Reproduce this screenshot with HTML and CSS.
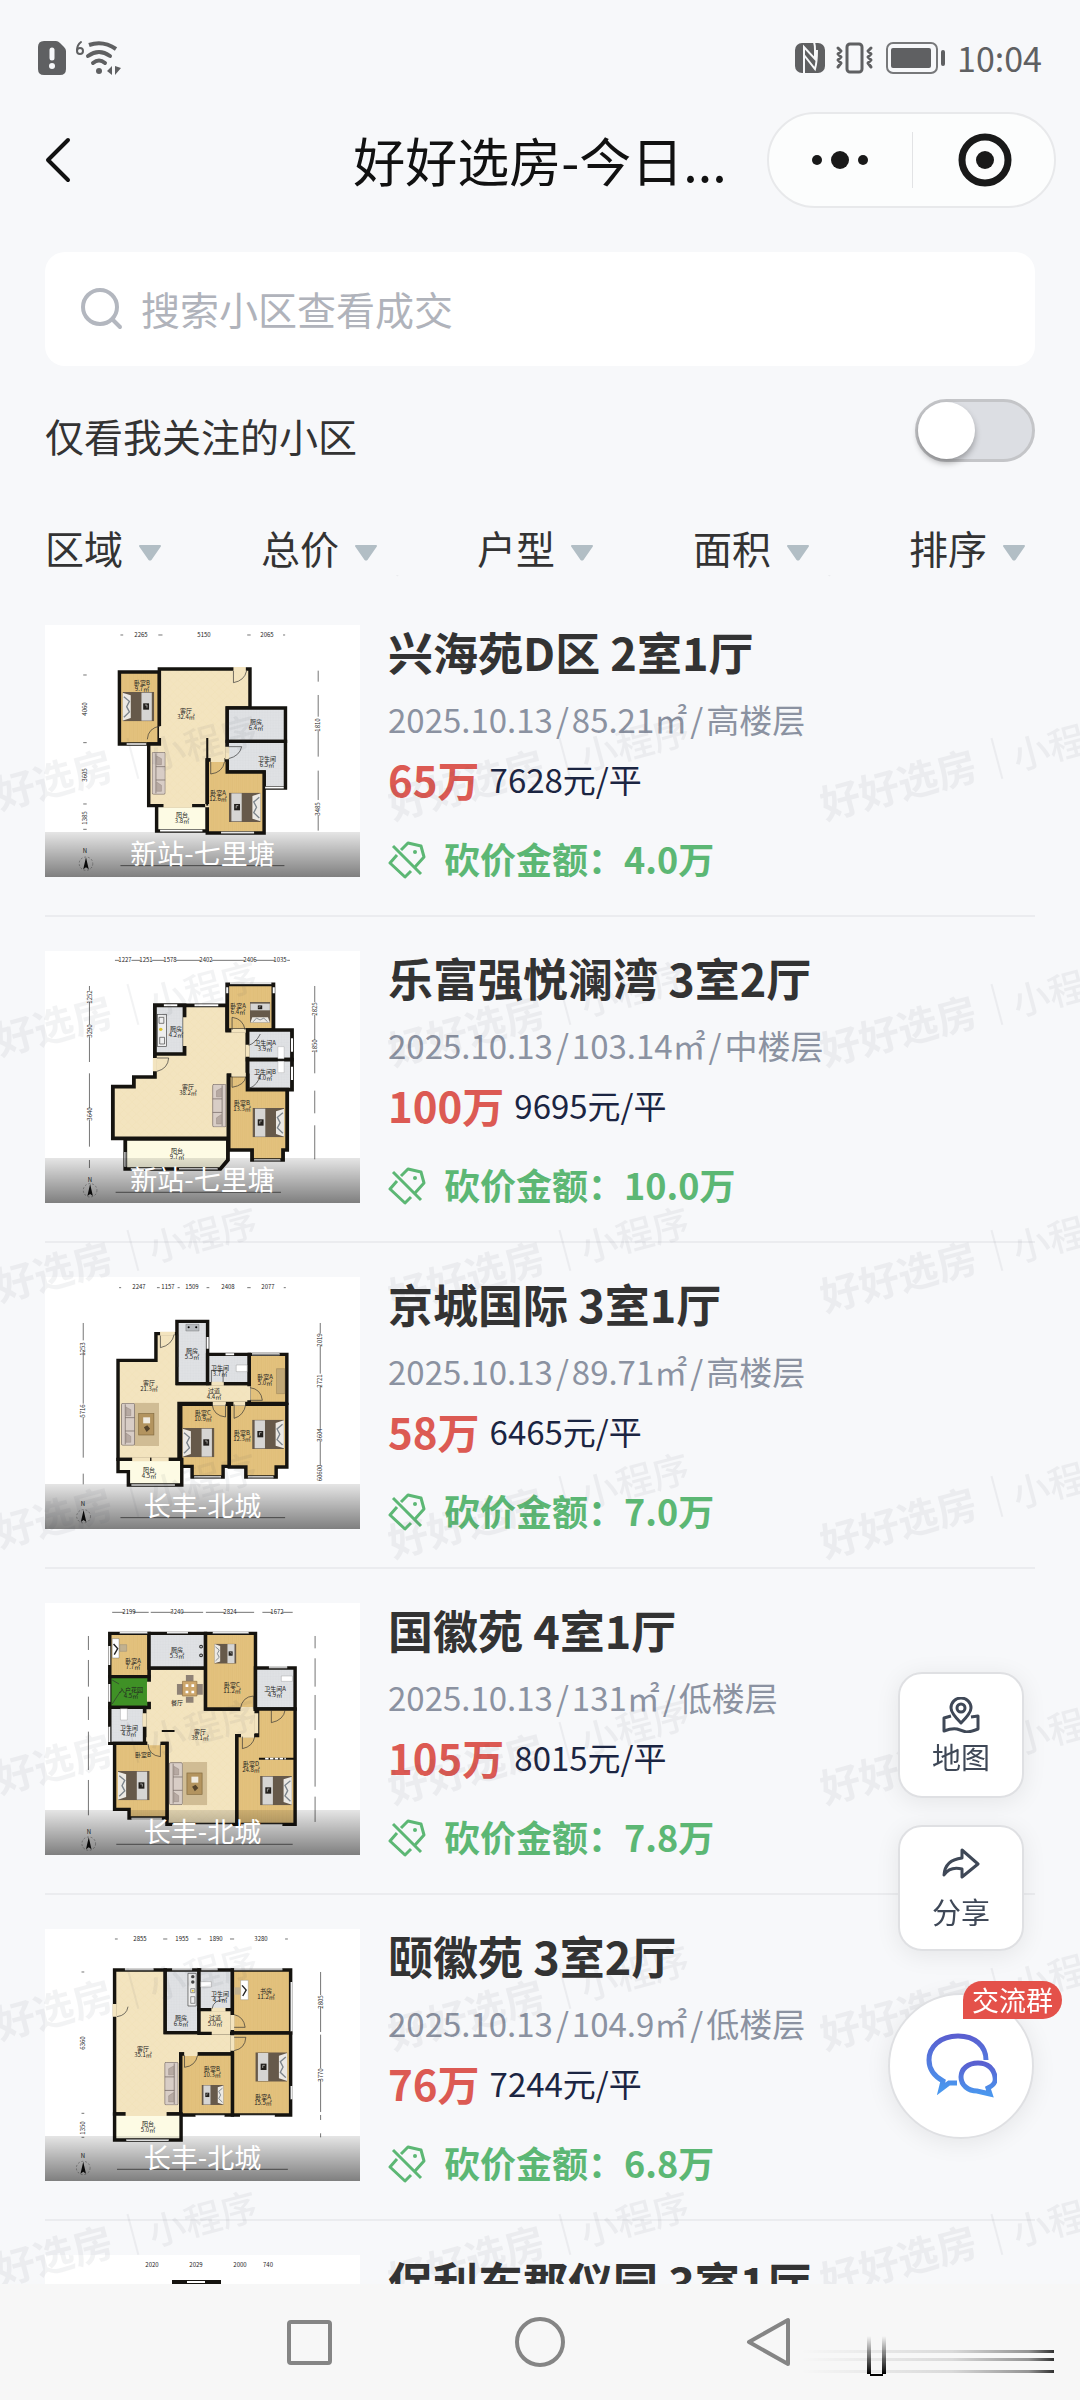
FILE: index.html
```html
<!DOCTYPE html>
<html lang="zh-CN">
<head>
    <meta charset="UTF-8">
    <meta name="viewport" content="width=device-width, initial-scale=1.0">
    <title>好好选房</title>
    <link rel="stylesheet" href="styles.css">
</head>
<body>
    <!-- shared svg pieces -->
    <svg class="defs" width="0" height="0" aria-hidden="true">
        <defs>
            <pattern id="wood" width="12" height="90" patternUnits="userSpaceOnUse">
                <rect width="12" height="90" fill="#e3c27e"/>
                <path d="M3 0v90M9 0v90" stroke="#dab76d" stroke-width="1"/>
            </pattern>
            <pattern id="tile" width="8" height="8" patternUnits="userSpaceOnUse">
                <rect width="8" height="8" fill="#dfe1e4"/>
                <path d="M0 0H8M0 0V8" stroke="#d3d6da" stroke-width="1"/>
            </pattern>
            <pattern id="floor" width="24" height="24" patternUnits="userSpaceOnUse">
                <rect width="24" height="24" fill="#f3e4bf"/>
                <path d="M0 12L12 0L24 12L12 24Z" fill="none" stroke="#eddcb2" stroke-width="1"/>
            </pattern>
            <linearGradient id="chat" x1="0" y1="0" x2="0" y2="1">
                <stop offset="0" stop-color="#5a5fd0"/>
                <stop offset="1" stop-color="#4a97ee"/>
            </linearGradient>
            <linearGradient id="streak" x1="0" y1="0" x2="1" y2="0">
                <stop offset="0" stop-color="#000" stop-opacity="0"/>
                <stop offset=".6" stop-color="#000" stop-opacity=".12"/>
                <stop offset=".9" stop-color="#000" stop-opacity=".4"/>
                <stop offset="1" stop-color="#000" stop-opacity=".8"/>
            </linearGradient>
            <linearGradient id="streak-down" x1="0" y1="0" x2="0" y2="1">
                <stop offset="0" stop-color="#000" stop-opacity="0"/>
                <stop offset="1" stop-color="#000"/>
            </linearGradient>
        </defs>
        <symbol id="bed" viewBox="0 0 92 88">
            <rect width="92" height="88" fill="#66594a"/>
            <path d="M0 2L24 10V78L0 86Z" fill="#ece9e4"/>
            <path d="M4 14L20 28L12 44L20 60L4 76" fill="none" stroke="#7d858c" stroke-width="4"/>
            <rect x="55" y="2" width="30" height="84" fill="#d6d5d3"/>
            <rect x="60" y="34" width="17" height="19" fill="#221f1c"/>
            <path d="M65 39h6v8" fill="none" stroke="#d6d5d3" stroke-width="2"/>
        </symbol>
        <symbol id="sofa" viewBox="0 0 40 128">
            <rect x="1" y="1" width="38" height="126" rx="4" fill="#d8cdc6" stroke="#6d625d" stroke-width="2"/>
            <path d="M12 4v120M12 44h27M12 84h27" fill="none" stroke="#6d625d" stroke-width="2"/>
            <path d="M14 12l14 8v18H14zM14 90l14 10v18H14z" fill="#b6a9a2" stroke="#83766f"/>
        </symbol>
        <symbol id="rug" viewBox="0 0 72 130">
            <rect width="72" height="130" fill="#d0bc94"/>
            <rect x="13" y="33" width="44" height="64" fill="#b3945f" stroke="#826a3f" stroke-width="2"/>
            <rect x="26" y="44" width="20" height="18" fill="#f0ebe0"/>
            <path d="M28 74l10-6 8 10-10 10z" fill="#54432b"/>
        </symbol>
        <symbol id="compass" viewBox="0 0 44 50">
            <circle cx="22" cy="25" r="20" fill="none" stroke="#222" stroke-width="1" stroke-dasharray="6 5"/>
            <path d="M22 6L30 42L22 36L14 42Z" fill="#111"/>
        </symbol>
        <symbol id="cut" viewBox="0 0 38 38">
            <g fill="none" stroke="currentColor" stroke-width="3" stroke-linejoin="round">
                <path d="M13 9L20 2L33 5L36 16L27 26"/>
                <path d="M9 14L2 22L17 36L23 30"/>
                <path d="M5 5L33 33"/>
            </g>
            <circle cx="27" cy="11" r="2" fill="currentColor"/>
        </symbol>
        <symbol id="caret" viewBox="0 0 24 16">
            <path d="M2 1H22L13 14Q12 15 11 14Z" fill="#b2bec5" stroke="#b2bec5" stroke-width="2" stroke-linejoin="round"/>
        </symbol>
    </svg>

    <header class="header">
        <div class="status-bar">
            <div class="status-group">
                <svg width="28" height="34" viewBox="0 0 28 34"><path d="M6 0H18Q20 0 22 2L26 6Q28 8 28 10V28Q28 34 22 34H6Q0 34 0 28V6Q0 0 6 0Z" fill="#5f6062"/><path d="M14 9V17" stroke="#f7f8fa" stroke-width="5" stroke-linecap="round"/><circle cx="14" cy="25" r="3" fill="#f7f8fa"/></svg>
                <svg width="46" height="36" viewBox="0 0 46 36">
                    <g fill="none" stroke="#5f6062" stroke-width="4" stroke-linecap="round">
                        <path d="M14 5Q28 0 41 9" stroke-linecap="butt"/>
                        <path d="M13 16Q24 8 35 16"/>
                        <path d="M18 23Q24 18 30 23"/>
                        <path d="M6 2Q2 5 2 10" stroke-width="2"/>
                        <ellipse cx="5" cy="11" rx="3" ry="3" stroke-width="2"/>
                    </g>
                    <circle cx="24" cy="31" r="3" fill="#5f6062"/>
                    <path d="M37 26V35L32 31ZM40 26V35L46 28Z" fill="#5f6062"/>
                </svg>
            </div>
            <div class="status-group status-right">
                <svg width="30" height="32" viewBox="0 0 30 32"><rect y="1" width="30" height="30" rx="7" fill="#5f6062"/><path d="M9 32V5L20 17V8Q20 3 19 0M9 13L20 27Q22 20 22 8" fill="none" stroke="#f7f8fa" stroke-width="2"/></svg>
                <svg width="40" height="32" viewBox="0 0 40 32"><g fill="none" stroke="#5f6062" stroke-width="3" stroke-linejoin="round" stroke-linecap="round"><rect x="12" y="2" width="15" height="28" rx="3"/><path d="M3 6L6 9L3 12L6 15L3 18L6 21L3 25M36 6L33 9L36 12L33 15L36 18L33 21L36 25"/></g></svg>
                <svg width="62" height="34" viewBox="0 0 62 34"><rect x="2" y="2" width="50" height="30" rx="6" fill="none" stroke="#77787a" stroke-width="2"/><rect x="6" y="7" width="40" height="20" rx="2" fill="#5f6062"/><path d="M58 11V23" stroke="#5f6062" stroke-width="4" stroke-linecap="round"/></svg>
                <span class="clock">10:04</span>
            </div>
        </div>
        <div class="nav-bar">
            <button class="back" type="button" aria-label="返回">
                <svg width="28" height="46" viewBox="0 0 28 46"><path d="M24 3L4 23L24 43" fill="none" stroke="#111" stroke-width="4" stroke-linecap="round" stroke-linejoin="round"/></svg>
            </button>
            <h1 class="page-title">好好选房-今日...</h1>
            <div class="capsule">
                <button type="button" aria-label="更多">
                    <svg width="58" height="20" viewBox="0 0 58 20" fill="#191919"><circle cx="6" cy="10" r="5"/><circle cx="29" cy="10" r="9"/><circle cx="52" cy="10" r="5"/></svg>
                </button>
                <button type="button" aria-label="关闭">
                    <svg width="54" height="54" viewBox="0 0 54 54"><circle cx="27" cy="27" r="23" fill="none" stroke="#191919" stroke-width="7"/><circle cx="27" cy="27" r="9" fill="#191919"/></svg>
                </button>
            </div>
        </div>
    </header>

    <main class="content">
        <label class="search">
            <svg width="42" height="42" viewBox="0 0 42 42"><g fill="none" stroke="#b3b7bf" stroke-width="4" stroke-linecap="round"><circle cx="19" cy="19" r="17"/><path d="M32 32L39 39"/></g></svg>
            <input type="text" placeholder="搜索小区查看成交" aria-label="搜索小区查看成交">
        </label>

        <div class="follow">
            <label for="follow">仅看我关注的小区</label>
            <input class="switch" type="checkbox" id="follow">
        </div>

        <div class="filters">
            <div class="filter"><select aria-label="区域"><option>区域</option></select><svg width="24" height="16"><use href="#caret"/></svg></div>
            <div class="filter"><select aria-label="总价"><option>总价</option></select><svg width="24" height="16"><use href="#caret"/></svg></div>
            <div class="filter"><select aria-label="户型"><option>户型</option></select><svg width="24" height="16"><use href="#caret"/></svg></div>
            <div class="filter"><select aria-label="面积"><option>面积</option></select><svg width="24" height="16"><use href="#caret"/></svg></div>
            <div class="filter"><select aria-label="排序"><option>排序</option></select><svg width="24" height="16"><use href="#caret"/></svg></div>
        </div>

        <div class="list">
            <article class="item">
                <div class="thumb">
                    <svg viewBox="0 0 315 252">
                        <g transform="scale(.3445 .3333) translate(-131 -75)">
                            <g stroke="#15130f" stroke-width="10">
                                <path d="M347 216H463V432H347Z" fill="url(#wood)"/>
                                <path d="M463 207H726V324H660V480H602V617H432V432H463Z" fill="url(#floor)"/>
                                <path d="M660 324H829V424H660Z" fill="url(#tile)"/>
                                <path d="M660 424H829V564H767V516H660Z" fill="url(#tile)"/>
                                <path d="M455 617H602V693H455Z" fill="#fdfbe4"/>
                                <path d="M602 480H660V516H767V699H602Z" fill="url(#wood)"/>
                            </g>
                            <path d="M678 207H714M660 440V478M468 378V414M475 617H558M612 480H652M602 612V622" stroke="#f3e4bf" stroke-width="12"/>
                            <path d="M602 414V617" stroke="#15130f" stroke-width="6"/>
                            <path d="M368 432H425M642 698H738M465 692H588M770 563H824" stroke="#fff" stroke-width="5"/>
                            <path d="M678 213V248Q710 242 716 213M428 418Q430 384 466 378M612 486V522Q646 518 652 486M664 476Q696 468 702 440H664" fill="none" stroke="#333" stroke-width="2"/>
                            <use href="#bed" x="356" y="276" width="92" height="88"/>
                            <use href="#bed" x="-757" y="578" width="92" height="88" transform="scale(-1 1)"/>
                            <use href="#sofa" x="441" y="456" width="40" height="128"/>
                            <g stroke="#333" stroke-width="2" fill="none">
                                <path d="M924 212V245M924 285V350M924 392V470M924 512V600M924 645V692M350 797H826"/>
                                <path d="M350 105h8M460 105h12M718 105h10M822 105h6M242 225h10M242 428h10M242 612h10M242 688h10"/>
                            </g>
                            <use href="#compass" x="228" y="766" width="44" height="50"/>
                        </g>
                        <g class="plan-text">
                            <text x="96" y="12">2265</text><text x="159" y="12">5150</text><text x="222" y="12">2065</text>
                            <text x="97" y="60">卧室B</text><text x="97" y="66">9.7㎡</text>
                            <text x="141" y="88">客厅</text><text x="141" y="94">32.4㎡</text>
                            <text x="211" y="99">厨房</text><text x="211" y="105">6.4㎡</text>
                            <text x="222" y="136">卫生间</text><text x="222" y="142">6.5㎡</text>
                            <text x="173" y="170">卧室A</text><text x="173" y="176">12.6㎡</text>
                            <text x="137" y="192">阳台</text><text x="137" y="198">3.8㎡</text>
                            <text x="40" y="228">N</text>
                            <text transform="translate(42 84) rotate(-90)">4060</text>
                            <text transform="translate(42 150) rotate(-90)">3605</text>
                            <text transform="translate(42 193) rotate(-90)">1385</text>
                            <text transform="translate(275 100) rotate(-90)">1810</text>
                            <text transform="translate(275 184) rotate(-90)">3485</text>
                        </g>
                    </svg>
                    <span class="area">新站-七里塘</span>
                </div>
                <div class="info">
                    <h2>兴海苑D区 2室1厅</h2>
                    <p class="meta">2025.10.13<i>/</i>85.21㎡<i>/</i>高楼层</p>
                    <p class="price"><strong>65万</strong><span>7628元/平</span></p>
                    <p class="bargain"><svg width="38" height="38"><use href="#cut"/></svg>砍价金额：4.0万</p>
                </div>
            </article>

            <article class="item">
                <div class="thumb">
                    <svg viewBox="0 0 315 252">
                        <g transform="scale(.3445 .3333) translate(-131 -63)">
                            <g stroke="#15130f" stroke-width="11">
                                <path d="M450 226H660V302H719V436H664V625H328V470H389V441H450Z" fill="url(#floor)"/>
                                <path d="M450 226H536V372H450Z" fill="url(#tile)"/>
                                <path d="M660 163H794V300H660Z" fill="url(#wood)"/>
                                <path d="M719 300H848V389H719Z" fill="url(#tile)"/>
                                <path d="M719 389H848V479H719Z" fill="url(#tile)"/>
                                <path d="M664 436H719V479H834V660H822V690H732V660H664Z" fill="url(#wood)"/>
                                <path d="M364 627H662V690L640 717H364Z" fill="#fdfbe4"/>
                            </g>
                            <path d="M538 262V348M450 384V424M672 302H714M719 344V380M672 434H714" stroke="#f3e4bf" stroke-width="12"/>
                            <path d="M476 226H515M565 226H634M848 325V365M848 410V450M364 666V710M380 717H470M520 717H632M738 691H814M668 160H788M660 172V190M795 172V190" stroke="#fff" stroke-width="6"/>
                            <path d="M364 666V710M380 718H632M738 692H814M668 163H788" stroke="#222" stroke-width="2"/>
                            <path d="M456 424Q488 416 490 384H456M674 300V262Q706 266 712 300M674 440V472Q710 466 714 440M722 346Q742 340 756 312M722 476Q750 466 758 430" fill="none" stroke="#333" stroke-width="2"/>
                            <rect x="457" y="254" width="27" height="96" fill="#eee" stroke="#444" stroke-width="2"/>
                            <path d="M462 262h14v18h-14zM464 322h14v20h-14z" fill="none" stroke="#444" stroke-width="2"/><circle cx="467" cy="298" r="5" fill="#ddc22c"/>
                            <path d="M807 350h18v36h-18zM807 394h18v34h-18z" fill="#fff" stroke="#999"/>
                            <use href="#bed" x="-297" y="726" width="100" height="59" transform="rotate(-90)" preserveAspectRatio="none"/>
                            <use href="#bed" x="-826" y="534" width="93" height="88" transform="scale(-1 1)"/>
                            <use href="#sofa" x="-658" y="462" width="42" height="130" transform="scale(-1 1)"/>
                            <g stroke="#333" stroke-width="2" fill="none">
                                <path d="M334 91H346M382 91H408M442 91H478M512 91H582M616 91H710M744 91H798M834 91H842"/>
                                <path d="M260 168V182M260 216V284M260 320V396M260 430V535M260 570V650M260 690V714M914 168V216M914 254V330M914 364V430M914 482V550M914 586V688M336 787H816"/>
                            </g>
                            <use href="#compass" x="240" y="756" width="44" height="50"/>
                        </g>
                        <g class="plan-text">
                            <text x="80" y="11">1227</text><text x="101" y="11">1251</text><text x="125" y="11">1578</text><text x="161" y="11">2402</text><text x="205" y="11">2406</text><text x="235" y="11">1035</text>
                            <text x="193" y="57">卧室A</text><text x="193" y="63">6.4㎡</text>
                            <text x="131" y="80">厨房</text><text x="131" y="86">4.2㎡</text>
                            <text x="220" y="94">卫生间A</text><text x="220" y="100">3.9㎡</text>
                            <text x="220" y="123">卫生间B</text><text x="220" y="129">4.0㎡</text>
                            <text x="143" y="138">客厅</text><text x="143" y="144">38.2㎡</text>
                            <text x="197" y="154">卧室B</text><text x="197" y="160">13.3㎡</text>
                            <text x="132" y="202">阳台</text><text x="132" y="208">9.7㎡</text>
                            <text x="45" y="231">N</text>
                            <text transform="translate(47 46) rotate(-90)">1252</text>
                            <text transform="translate(47 80) rotate(-90)">3290</text>
                            <text transform="translate(47 163) rotate(-90)">3640</text>
                            <text transform="translate(272 58) rotate(-90)">2825</text>
                            <text transform="translate(272 95) rotate(-90)">1850</text>
                        </g>
                    </svg>
                    <span class="area">新站-七里塘</span>
                </div>
                <div class="info">
                    <h2>乐富强悦澜湾 3室2厅</h2>
                    <p class="meta">2025.10.13<i>/</i>103.14㎡<i>/</i>中楼层</p>
                    <p class="price"><strong>100万</strong><span>9695元/平</span></p>
                    <p class="bargain"><svg width="38" height="38"><use href="#cut"/></svg>砍价金额：10.0万</p>
                </div>
            </article>

            <article class="item">
                <div class="thumb">
                    <svg viewBox="0 0 315 252">
                        <g transform="scale(.3445 .3333) translate(-131 -80)">
                            <g stroke="#15130f" stroke-width="10">
                                <path d="M453 250H516V400H724V459H520V627H343V330H453Z" fill="url(#floor)"/>
                                <path d="M514 213H603V400H514Z" fill="url(#tile)"/>
                                <path d="M603 312H724V400H603Z" fill="url(#tile)"/>
                                <path d="M724 312H833V459H724Z" fill="url(#wood)"/>
                                <path d="M525 462H666V648H648V680H558V648H525Z" fill="url(#wood)"/>
                                <path d="M666 462H833V650H802V680H714V650H666Z" fill="url(#wood)"/>
                                <path d="M343 627H528V704H373V664H343Z" fill="#fdfbe4"/>
                            </g>
                            <path d="M465 250H508M614 400H650M722 408V450M618 460H656M678 460H712M384 627H436M440 627H490" stroke="#f3e4bf" stroke-width="12"/>
                            <path d="M655 312H680M732 312H812M603 260V295M564 681H642M720 681H794M382 704H508" stroke="#fff" stroke-width="6"/>
                            <path d="M732 313H812M564 682H642M720 682H794M382 704H508M517 252V350" stroke="#333" stroke-width="2"/>
                            <path d="M466 256V292Q500 284 506 252M616 462Q620 496 655 500V462M680 462V504Q708 496 714 462M726 450H762Q758 416 726 412M614 396V360H648V396" fill="none" stroke="#333" stroke-width="2"/>
                            <path d="M540 222h38v20h-38z" fill="#b9bcc0" stroke="#555"/><circle cx="548" cy="231" r="3"/><circle cx="570" cy="231" r="3"/>
                            <path d="M686 344h32v20h-32z" fill="#fff" stroke="#777"/>
                            <path d="M803 355h24v75h-24z" fill="#c1a877" stroke="#7f6d49"/>
                            <use href="#rug" x="390" y="457" width="72" height="130"/>
                            <use href="#sofa" x="351" y="458" width="42" height="128"/>
                            <use href="#bed" x="530" y="533" width="93" height="88"/>
                            <use href="#bed" x="-825" y="508" width="93" height="88" transform="scale(-1 1)"/>
                            <g stroke="#333" stroke-width="2" fill="none">
                                <path d="M242 218V270M242 300V460M242 500V622M242 670V702M930 218V250M930 285V370M930 405V535M930 570V645M350 802H828"/>
                                <path d="M346 112h6M456 112h8M516 112h6M600 112h8M718 112h10M824 112h6"/>
                            </g>
                            <use href="#compass" x="221" y="773" width="44" height="50"/>
                        </g>
                        <g class="plan-text">
                            <text x="94" y="12">2247</text><text x="123" y="12">1157</text><text x="147" y="12">1509</text><text x="183" y="12">2408</text><text x="223" y="12">2077</text>
                            <text x="147" y="76">厨房</text><text x="147" y="82">5.5㎡</text>
                            <text x="175" y="93">卫生间</text><text x="175" y="99">3.7㎡</text>
                            <text x="220" y="102">卧室A</text><text x="220" y="108">5.0㎡</text>
                            <text x="104" y="108">客厅</text><text x="104" y="114">21.3㎡</text>
                            <text x="169" y="116">过道</text><text x="169" y="122">4.4㎡</text>
                            <text x="158" y="138">卧室C</text><text x="158" y="144">10.9㎡</text>
                            <text x="197" y="158">卧室B</text><text x="197" y="164">12.3㎡</text>
                            <text x="104" y="195">阳台</text><text x="104" y="201">4.5㎡</text>
                            <text x="38" y="229">N</text>
                            <text transform="translate(40 72) rotate(-90)">1253</text>
                            <text transform="translate(40 134) rotate(-90)">5716</text>
                            <text transform="translate(277 63) rotate(-90)">2019</text>
                            <text transform="translate(277 104) rotate(-90)">2721</text>
                            <text transform="translate(277 158) rotate(-90)">3604</text>
                            <text transform="translate(277 196) rotate(-90)">60600</text>
                        </g>
                    </svg>
                    <span class="area">长丰-北城</span>
                </div>
                <div class="info">
                    <h2>京城国际 3室1厅</h2>
                    <p class="meta">2025.10.13<i>/</i>89.71㎡<i>/</i>高楼层</p>
                    <p class="price"><strong>58万</strong><span>6465元/平</span></p>
                    <p class="bargain"><svg width="38" height="38"><use href="#cut"/></svg>砍价金额：7.0万</p>
                </div>
            </article>

            <article class="item">
                <div class="thumb">
                    <svg viewBox="0 0 315 252">
                        <g transform="scale(.3445 .3333) translate(-131 -69)">
                            <g stroke="#15130f" stroke-width="10">
                                <path d="M433 264H597V387H744V467H688V733H485V490H420V383H433Z" fill="url(#floor)"/>
                                <path d="M319 160H433V290H319Z" fill="url(#wood)"/>
                                <path d="M433 160H597V264H433Z" fill="url(#tile)"/>
                                <path d="M597 160H742V387H597Z" fill="url(#wood)"/>
                                <path d="M319 290H433V382H319Z" fill="#3f9126"/>
                                <path d="M319 382H420V490H319Z" fill="url(#tile)"/>
                                <path d="M742 264H857V387H742Z" fill="url(#tile)"/>
                                <path d="M333 490H485V714H375V688H333Z" fill="url(#wood)"/>
                                <path d="M748 387H857V733H688V467H748Z" fill="url(#wood)"/>
                            </g>
                            <path d="M433 305V365M698 387H736M744 400V460M420 400V440M428 490H466M700 467H738M425 478H470" stroke="#f3e4bf" stroke-width="12"/>
                            <path d="M348 158H428M485 158H546M618 158H722M781 262H834M318 198V255M318 312V365M318 440V486M382 716H470M500 735H672M700 735H820" stroke="#fff" stroke-width="6"/>
                            <path d="M348 160H428M485 160H546M618 160H722M781 264H834M321 198V255M321 312V365M321 440V486M382 714H470M500 732H672M700 732H820" stroke="#444" stroke-width="2"/>
                            <path d="M470 453H507M752 536H857" stroke="#15130f" stroke-width="6"/>
                            <path d="M770 536H830" stroke="#fff" stroke-width="5" stroke-dasharray="10 4"/>
                            <path d="M698 386Q704 350 736 348V386M788 390V428Q824 420 828 390M704 470V506Q734 500 740 470M466 492V530Q432 526 430 492M326 300L346 312M326 372L350 334" fill="none" stroke="#333" stroke-width="2"/>
                            <path d="M326 176h20v58h-20z" fill="#fff" stroke="#444"/><path d="M330 192l12 14-10 18" fill="none" stroke="#222" stroke-width="4"/><path d="M348 194h20v20h-20z" fill="#c1b190" stroke="#777"/>
                            <path d="M350 386h20v34h-20zM817 288h32v16h-32z" fill="#fff" stroke="#888"/>
                            <circle cx="584" cy="200" r="4" fill="none" stroke="#222" stroke-width="3"/><circle cx="584" cy="226" r="4" fill="none" stroke="#222" stroke-width="3"/>
                            <!-- dining table -->
                            <path d="M540 285h22v18h-22zM540 350h22v18h-22zM514 312h18v32h-18zM571 312h18v32h-18z" fill="#8f8276"/>
                            <path d="M530 304h42v44h-42z" fill="#cda66b" stroke="#937346" stroke-width="2"/><path d="M539 313h8v8h-8zM556 313h8v8h-8zM539 332h8v8h-8zM556 332h8v8h-8z" fill="#fff"/>
                            <use href="#rug" x="530" y="546" width="72" height="130"/>
                            <use href="#sofa" x="491" y="546" width="40" height="130"/>
                            <use href="#bed" x="606" y="191" width="97" height="60" preserveAspectRatio="none"/>
                            <use href="#bed" x="342" y="573" width="93" height="88"/>
                            <use href="#bed" x="-848" y="588" width="93" height="88" transform="scale(-1 1)"/>
                            <g stroke="#333" stroke-width="2" fill="none">
                                <path d="M326 97H360M388 97H432M438 97H500M528 97H590M598 97H652M684 97H738M762 97H790M820 97H850"/>
                                <path d="M257 168V210M257 240V320M257 350V420M257 455V570M257 600V706M915 168V205M915 235V320M915 345V450M915 475V620M915 650V726M338 793H850"/>
                            </g>
                            <use href="#compass" x="236" y="766" width="44" height="50"/>
                        </g>
                        <g class="plan-text">
                            <text x="84" y="11">2199</text><text x="132" y="11">3240</text><text x="185" y="11">2824</text><text x="232" y="11">1672</text>
                            <text x="88" y="60">卧室A</text><text x="88" y="66">7.7㎡</text>
                            <text x="132" y="49">厨房</text><text x="132" y="55">5.3㎡</text>
                            <text x="187" y="84">卧室C</text><text x="187" y="90">11.2㎡</text>
                            <text x="86" y="89">入户花园</text><text x="86" y="95">4.5㎡</text>
                            <text x="230" y="88">卫生间A</text><text x="230" y="94">4.9㎡</text>
                            <text x="132" y="102">餐厅</text>
                            <text x="84" y="127">卫生间</text><text x="84" y="133">4.0㎡</text>
                            <text x="155" y="131">客厅</text><text x="155" y="137">39.1㎡</text>
                            <text x="98" y="154">卧室B</text>
                            <text x="206" y="163">卧室D</text><text x="206" y="169">24.8㎡</text>
                            <text x="44" y="231">N</text>
                        </g>
                    </svg>
                    <span class="area">长丰-北城</span>
                </div>
                <div class="info">
                    <h2>国徽苑 4室1厅</h2>
                    <p class="meta">2025.10.13<i>/</i>131㎡<i>/</i>低楼层</p>
                    <p class="price"><strong>105万</strong><span>8015元/平</span></p>
                    <p class="bargain"><svg width="38" height="38"><use href="#cut"/></svg>砍价金额：7.8万</p>
                </div>
            </article>

            <article class="item">
                <div class="thumb">
                    <svg viewBox="0 0 315 252">
                        <g transform="scale(.3445 .3333) translate(-131 -87)">
                            <g stroke="#15130f" stroke-width="10">
                                <path d="M333 210H480V398H675V462H525V642H333Z" fill="url(#floor)"/>
                                <path d="M480 210H578V398H480Z" fill="url(#tile)"/>
                                <path d="M578 210H675V329H578Z" fill="url(#tile)"/>
                                <path d="M578 329H675V400H578Z" fill="url(#floor)"/>
                                <path d="M675 210H844V399H675Z" fill="url(#wood)"/>
                                <path d="M675 399H844V645H675Z" fill="url(#wood)"/>
                                <path d="M525 462H675V645H525Z" fill="url(#wood)"/>
                                <path d="M333 642H526V720H333Z" fill="#fdfbe4"/>
                            </g>
                            <path d="M615 398H668M675 345V390M675 406V452M535 462H574M365 642H484M614 329H655M333 312V350" stroke="#f3e4bf" stroke-width="12"/>
                            <path d="M363 208H446M500 208H558M585 208H632M680 208H820M846 246V394M846 558V598M568 648H652M697 648H798M367 720H490" stroke="#fff" stroke-width="6"/>
                            <path d="M363 210H446M500 210H558M585 210H632M680 210H820M844 246V394M844 558V598M568 645H652M697 645H798M367 718H490" stroke="#444" stroke-width="2"/>
                            <path d="M340 350Q368 346 372 320M680 344Q708 350 712 382H680M680 452Q712 446 714 412H680M536 466V502Q568 498 574 466M616 326Q620 300 652 298" fill="none" stroke="#333" stroke-width="2"/>
                            <path d="M546 220h24v98h-24z" fill="#eee" stroke="#444" stroke-width="2"/><circle cx="560" cy="230" r="5" fill="#444"/><circle cx="560" cy="246" r="5" fill="#444"/><path d="M554 266h12v12h-12zM554 290h12v20h-12z" fill="none" stroke="#666" stroke-width="2"/><circle cx="560" cy="272" r="3" fill="#ddc22c"/>
                            <path d="M583 245h31v16h-31zM699 241h22v58h-22z" fill="#fff" stroke="#777"/><path d="M703 256l12 14-10 18" fill="none" stroke="#222" stroke-width="4"/><path d="M680 262h18v22h-18z" fill="#c1b190"/>
                            <use href="#sofa" x="-519" y="486" width="42" height="130" transform="scale(-1 1)"/>
                            <use href="#bed" x="-835" y="457" width="94" height="88" transform="scale(-1 1)"/>
                            <use href="#bed" x="-666" y="555" width="97" height="60" transform="scale(-1 1)" preserveAspectRatio="none"/>
                            <g stroke="#333" stroke-width="2" fill="none">
                                <path d="M931 216V285M931 320V396M931 404V505M931 540V636M931 645V660M931 700V712M340 808H836"/>
                                <path d="M334 117h8M474 117h12M574 117h10M668 117h12M828 117h8M237 216h8M237 640h8M237 712h8"/>
                            </g>
                            <use href="#compass" x="220" y="779" width="44" height="50"/>
                        </g>
                        <g class="plan-text">
                            <text x="95" y="12">2855</text><text x="137" y="12">1955</text><text x="171" y="12">1890</text><text x="216" y="12">3280</text>
                            <text x="175" y="67">卫生间</text><text x="175" y="73">4.1㎡</text>
                            <text x="221" y="64">书房</text><text x="221" y="70">11.2㎡</text>
                            <text x="136" y="91">厨房</text><text x="136" y="97">6.6㎡</text>
                            <text x="170" y="91">过道</text><text x="170" y="97">5.0㎡</text>
                            <text x="98" y="122">客厅</text><text x="98" y="128">35.1㎡</text>
                            <text x="167" y="142">卧室B</text><text x="167" y="148">10.3㎡</text>
                            <text x="218" y="170">卧室A</text><text x="218" y="176">15.5㎡</text>
                            <text x="103" y="197">阳台</text><text x="103" y="203">5.0㎡</text>
                            <text x="38" y="229">N</text>
                            <text transform="translate(40 114) rotate(-90)">6360</text>
                            <text transform="translate(40 199) rotate(-90)">1350</text>
                            <text transform="translate(278 73) rotate(-90)">2805</text>
                            <text transform="translate(278 146) rotate(-90)">3770</text>
                        </g>
                    </svg>
                    <span class="area">长丰-北城</span>
                </div>
                <div class="info">
                    <h2>颐徽苑 3室2厅</h2>
                    <p class="meta">2025.10.13<i>/</i>104.9㎡<i>/</i>低楼层</p>
                    <p class="price"><strong>76万</strong><span>7244元/平</span></p>
                    <p class="bargain"><svg width="38" height="38"><use href="#cut"/></svg>砍价金额：6.8万</p>
                </div>
            </article>

            <article class="item">
                <div class="thumb">
                    <svg viewBox="0 0 315 252">
                        <path d="M127 27H176" stroke="#15130f" stroke-width="4"/>
                        <path d="M142 27H160" stroke="#fff" stroke-width="2"/>
                        <g class="plan-text">
                            <text x="107" y="12">2020</text><text x="151" y="12">2029</text><text x="195" y="12">2000</text><text x="223" y="12">740</text>
                        </g>
                    </svg>
                </div>
                <div class="info">
                    <h2>保利东郡仪园 3室1厅</h2>
                </div>
            </article>

            <svg class="watermark" width="100%" height="100%" aria-hidden="true">
                <pattern id="mark" x="-44" y="120" width="432" height="246" patternUnits="userSpaceOnUse">
                    <g transform="translate(5 125) rotate(-15)">
                        <text class="mark-name" x="0" y="0">好好选房</text>
                        <path d="M182 6V-36" stroke="#3c4050" stroke-width="2"/>
                        <text class="mark-type" x="198" y="2">小程序</text>
                    </g>
                </pattern>
                <rect width="100%" height="100%" fill="url(#mark)"/>
            </svg>
        </div>
    </main>

    <div class="float-buttons">
        <button class="float-btn" type="button">
            <svg width="38" height="36" viewBox="0 0 38 36"><g fill="none" stroke="#3f4857" stroke-width="3" stroke-linejoin="round"><path d="M19 26Q9 16 9 11A10 10 0 0 1 29 11Q29 16 19 26Z"/><circle cx="19" cy="11" r="4"/><path d="M9 19L2 21V34Q10 31 15 32L24 35Q29 35 36 32V19L29 20"/></g></svg>
            地图
        </button>
        <button class="float-btn share" type="button">
            <svg width="38" height="32" viewBox="0 0 38 32"><path d="M20 2L36 16L20 29V21Q8 18 2 27Q3 12 20 10Z" fill="none" stroke="#3f4857" stroke-width="3" stroke-linejoin="round"/></svg>
            分享
        </button>
        <button class="chat-btn" type="button" aria-label="交流群">
            <svg width="72" height="68" viewBox="0 0 72 68">
                <g fill="none" stroke="url(#chat)" stroke-width="5">
                    <path d="M61 28C61 14 50 4 33 4C15 4 4 15 4 28C4 38 9 44 18 49L16 57L24 51L32 51"/>
                    <path d="M53 31C43 31 36 37 36 45C36 53 43 59 52 59L65 62L63 56C69 53 71 50 70 45C69 37 63 31 53 31Z"/>
                </g>
            </svg>
            <span class="badge">交流群</span>
        </button>
    </div>

    <nav class="system-nav">
        <button type="button" aria-label="最近任务"><svg width="50" height="50" viewBox="0 0 50 50"><rect x="4" y="5" width="41" height="41" rx="2" fill="none" stroke="#858585" stroke-width="4"/></svg></button>
        <button type="button" aria-label="主屏幕"><svg width="50" height="50" viewBox="0 0 50 50"><circle cx="25" cy="25" r="23" fill="none" stroke="#858585" stroke-width="4"/></svg></button>
        <button type="button" aria-label="返回"><svg width="50" height="50" viewBox="0 0 50 50"><path d="M43 3V47L4 25Z" fill="none" stroke="#858585" stroke-width="4" stroke-linejoin="round"/></svg></button>
        <svg class="corner-mark" width="260" height="50" viewBox="0 0 260 50" aria-hidden="true">
            <path d="M0 20H254V23H0ZM0 28H254V31H0ZM0 40H254V43H0Z" fill="url(#streak)"/>
            <path d="M67 6H71V44H67ZM82 6H86V44H82Z" fill="url(#streak-down)"/>
            <path d="M70 45H83" stroke="#000" stroke-width="2"/>
        </svg>
    </nav>
</body>
</html>
```
FILE: styles.css
```css
* {
    box-sizing: border-box;
}
body, html {
    height: 100%;
    margin: 0;
    font-family: "Noto Sans CJK SC", "Noto Sans", sans-serif;
    overflow: hidden;
}
body {
    display: flex;
    flex-direction: column;
    background-color: #f7f8fa;
    color: #333;
}
button {
    padding: 0;
    border: none;
    background: none;
    font-family: inherit;
    cursor: pointer;
}
svg {
    display: block;
    flex-shrink: 0;
}
h1, h2, p {
    margin: 0;
}
.defs {
    position: absolute;
}

/* top bars */
.status-bar {
    display: flex;
    justify-content: space-between;
    align-items: center;
    height: 112px;
    padding: 4px 38px 0;
}
.status-group {
    display: flex;
    align-items: center;
    gap: 9px;
}
.status-right {
    gap: 10px;
}
.clock {
    font-size: 34px;
    line-height: 40px;
    color: #5f6062;
}
.nav-bar {
    display: grid;
    grid-template-columns: 1fr auto 1fr;
    align-items: center;
    height: 96px;
    padding: 0 24px;
}
.back {
    justify-self: start;
    margin-left: 20px;
}
.page-title {
    font-size: 52px;
    font-weight: 400;
    line-height: 64px;
    color: #111;
}
.capsule {
    justify-self: end;
    display: grid;
    grid-template-columns: 1fr 1fr;
    width: 289px;
    height: 96px;
    border: 2px solid #e8e9eb;
    border-radius: 48px;
    background-color: #fcfdfd;
}
.capsule button {
    display: flex;
    justify-content: center;
    align-items: center;
    margin: 18px 0;
}
.capsule button + button {
    padding-left: 4px;
    border-left: 1px solid #e2e3e5;
}

/* search and filters */
.content {
    flex: 1;
    min-height: 0;
    overflow: hidden;
    padding-top: 44px;
}
.search {
    display: flex;
    align-items: center;
    gap: 18px;
    height: 114px;
    margin: 0 45px;
    padding: 0 36px;
    border-radius: 20px;
    background-color: #fff;
}
.search input {
    flex: 1;
    min-width: 0;
    height: 60px;
    padding: 0 0 2px;
    border: none;
    outline: none;
    background: none;
    font-family: inherit;
    font-size: 39px;
}
.search input::placeholder {
    color: #b0b3bb;
}
.follow {
    display: flex;
    justify-content: space-between;
    align-items: flex-start;
    padding: 33px 45px 0;
    font-size: 39px;
    line-height: 72px;
}
.switch {
    appearance: none;
    width: 120px;
    height: 63px;
    margin: 0;
    border: 3px solid #c4c5c8;
    border-radius: 32px;
    background-color: #dcdee3;
}
.switch::before {
    content: "";
    display: block;
    width: 57px;
    height: 57px;
    border-radius: 50%;
    background-color: #fff;
    box-shadow: 0 4px 6px rgba(0, 0, 0, 0.3);
}
.filters {
    display: flex;
    justify-content: space-between;
    padding: 48px 54px 0 45px;
}
.filter {
    display: flex;
    align-items: center;
    gap: 15px;
}
.filter select {
    appearance: none;
    width: 78px;
    height: 56px;
    padding: 0;
    border: none;
    background: none;
    font-family: inherit;
    font-size: 39px;
    line-height: 56px;
    color: #333;
}
.filter svg {
    margin-top: 12px;
}

/* listing */
.list {
    position: relative;
    padding: 16px 45px 0;
}
.item {
    display: flex;
    gap: 28px;
    height: 326px;
    padding-top: 34px;
    border-bottom: 2px solid #ebecef;
}
.thumb {
    position: relative;
    flex-shrink: 0;
    width: 315px;
    height: 252px;
    background-color: #fff;
}
.area {
    position: absolute;
    left: 0;
    right: 0;
    bottom: 0;
    height: 45px;
    font-size: 27px;
    line-height: 41px;
    text-align: center;
    color: #fff;
    background: linear-gradient(rgba(0, 0, 0, 0.1), rgba(0, 0, 0, 0.5));
}
.plan-text {
    font-size: 6px;
    text-anchor: middle;
    fill: #222;
}
.info {
    white-space: nowrap;
}
.info h2 {
    font-size: 45px;
    font-weight: 700;
    line-height: 54px;
}
.meta {
    margin-top: 20px;
    font-size: 33px;
    line-height: 40px;
    color: #8b92a1;
}
.meta i {
    padding: 0 3px;
    font-style: normal;
}
.price {
    display: flex;
    align-items: center;
    gap: 10px;
    margin-top: 16px;
    font-size: 33px;
    line-height: 48px;
    color: #1b2542;
}
.price strong {
    font-size: 42px;
    color: #dc5a53;
}
.bargain {
    display: flex;
    align-items: flex-end;
    gap: 18px;
    margin-top: 34px;
    font-size: 36px;
    font-weight: 700;
    line-height: 42px;
    color: #5cb774;
}
.watermark {
    position: absolute;
    top: 0;
    left: 0;
    opacity: 0.06;
    pointer-events: none;
}
.mark-name {
    font-size: 40px;
    font-weight: 700;
    fill: #3c4050;
}
.mark-type {
    font-size: 37px;
    font-weight: 500;
    fill: #3c4050;
}

/* floating actions */
.float-buttons {
    position: fixed;
    right: 46px;
    bottom: 261px;
    display: flex;
    flex-direction: column;
    align-items: center;
    gap: 27px;
}
.float-btn {
    display: flex;
    flex-direction: column;
    justify-content: center;
    align-items: center;
    gap: 6px;
    width: 126px;
    height: 126px;
    border: 2px solid #dfe0e3;
    border-radius: 24px;
    background-color: #fff;
    box-shadow: 0 4px 24px rgba(0, 0, 0, 0.08);
    font-size: 29px;
    line-height: 34px;
    color: #3f4857;
}
.share {
    gap: 14px;
}
.chat-btn {
    position: relative;
    display: flex;
    justify-content: center;
    align-items: center;
    width: 146px;
    height: 146px;
    margin-top: 15px;
    border: 2px solid #dfe0e3;
    border-radius: 50%;
    background-color: #fff;
    box-shadow: 0 4px 24px rgba(0, 0, 0, 0.08);
}
.badge {
    position: absolute;
    top: -14px;
    right: -30px;
    padding: 0 9px;
    border-radius: 20px 20px 20px 0;
    background-color: #e4514a;
    font-size: 27px;
    line-height: 38px;
    color: #fff;
}

/* system navigation */
.system-nav {
    position: relative;
    z-index: 1;
    display: flex;
    justify-content: center;
    align-items: center;
    gap: 180px;
    height: 116px;
    background-color: #f7f7f7;
}
.corner-mark {
    position: absolute;
    right: 20px;
    bottom: 20px;
}
```
